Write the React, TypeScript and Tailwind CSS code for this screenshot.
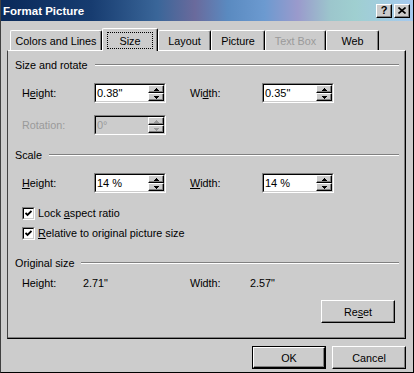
import React from 'react';

const raised =
  'border border-t-white border-l-white border-b-black border-r-black shadow-[inset_-1px_-1px_0_#808080]';

function Arrow({ up, color }: { up?: boolean; color: string }) {
  return (
    <svg width="5" height="3" viewBox="0 0 5 3" shapeRendering="crispEdges">
      <polygon points={up ? '2.5,0 5,3 0,3' : '0,0 5,0 2.5,3'} fill={color} />
    </svg>
  );
}

function Spin({ disabled }: { disabled?: boolean }) {
  const c = disabled ? '#9a9a9a' : '#000';
  return (
    <div className="flex flex-col w-[16px] h-[16px]">
      <div className={`h-[8px] bg-[#cccccc] flex items-center justify-center ${raised}`}>
        <Arrow up color={c} />
      </div>
      <div className={`h-[8px] bg-[#cccccc] flex items-center justify-center ${raised}`}>
        <Arrow color={c} />
      </div>
    </div>
  );
}

function Field({ value, disabled }: { value: string; disabled?: boolean }) {
  return (
    <div className="w-[72px] h-[20px] border border-t-[#808080] border-l-[#808080] border-b-white border-r-white">
      <div
        className={`h-full flex border border-t-black border-l-black border-b-[#cccccc] border-r-[#cccccc] ${
          disabled ? 'bg-[#cccccc] text-[#9a9a9a]' : 'bg-white text-black'
        }`}
      >
        <span className="flex-1 pl-[1px] leading-[16px] text-[11px]">{value}</span>
        <Spin disabled={disabled} />
      </div>
    </div>
  );
}

function Group({ title }: { title: string }) {
  return (
    <div className="flex items-center h-[14px] pl-[7px] pr-[6px]">
      <span>{title}</span>
      <div className="flex-1 ml-[7px] border-t border-t-[#808080] border-b border-b-white" />
    </div>
  );
}

function Check({ children }: { children: React.ReactNode }) {
  return (
    <div className="flex items-center h-[14px] pl-[14px]">
      <div className="w-[13px] h-[13px] border border-t-[#808080] border-l-[#808080] border-b-white border-r-white">
        <div className="w-full h-full bg-white border border-t-black border-l-black border-b-[#cccccc] border-r-[#cccccc] flex items-center justify-center">
          <svg width="7" height="7" viewBox="0 0 7 7">
            <path d="M0.5 3 L2.5 5 L6.5 1" stroke="#000" strokeWidth="1.8" fill="none" />
          </svg>
        </div>
      </div>
      <span className="ml-[3px]">{children}</span>
    </div>
  );
}

function Tab({ label, w, disabled }: { label: string; w: string; disabled?: boolean }) {
  return (
    <div
      className={`${w} h-[20px] flex items-center justify-center border-t border-l border-r border-t-white border-l-white border-r-black rounded-t-[2px] shadow-[inset_-1px_0_0_#808080] ${
        disabled ? 'text-[#9a9a9a]' : ''
      }`}
    >
      {label}
    </div>
  );
}

function Button({ children, def, w = 'w-[74px]' }: { children: React.ReactNode; def?: boolean; w?: string }) {
  return (
    <div className={`${w} h-[23px] ${def ? 'border border-black' : ''}`}>
      <div className={`w-full h-full bg-[#cccccc] flex items-center justify-center ${raised}`}>{children}</div>
    </div>
  );
}

export default function App() {
  return (
    <div className="w-[414px] h-[373px] bg-[#cccccc] border-l border-r border-b border-l-[#404040] border-r-black border-b-black flex flex-col text-[10.8px] text-black font-['Liberation_Sans',Arial,sans-serif] leading-[14px] select-none">
      {/* Title bar */}
      <div className="h-[21px] flex items-center pl-[2px] pr-[3px] bg-[linear-gradient(90deg,#0a2a5a_0%,#173c70_22%,#3a6699_38%,#6a6a9c_47%,#5a8ac0_55%,#6c9ad0_64%,#9a9acc_72%,#9cc6cc_80%,#9fcfd0_86%,#a6caf0_100%)]">
        <span className="text-white font-bold text-[11.5px]">Format Picture</span>
        <div className="ml-auto flex gap-[2px]">
          <div className={`w-[16px] h-[14px] bg-[#cccccc] flex items-center justify-center font-bold text-[11px] leading-none ${raised}`}>
            ?
          </div>
          <div className={`w-[16px] h-[14px] bg-[#cccccc] flex items-center justify-center ${raised}`}>
            <svg width="8" height="7" viewBox="0 0 8 7">
              <path d="M0.5 0.5 L7.5 6.5 M7.5 0.5 L0.5 6.5" stroke="#000" strokeWidth="1.6" />
            </svg>
          </div>
        </div>
      </div>

      {/* Tabs */}
      <div className="flex items-end h-[22px] mt-[7px] pl-[9px]">
        <Tab label="Colors and Lines" w="w-[92px]" />
        <div className="relative z-10 w-[56px] h-[23px] -mb-px bg-[#cccccc] border-t border-l border-r border-t-white border-l-white border-r-black rounded-t-[2px] shadow-[inset_-1px_0_0_#808080] pt-[3px] px-[4px]">
          <div className="h-[17px] border border-dotted border-black flex items-center justify-center">Size</div>
        </div>
        <Tab label="Layout" w="w-[53px]" />
        <Tab label="Picture" w="w-[54px]" />
        <Tab label="Text Box" w="w-[61px]" disabled />
        <Tab label="Web" w="w-[53px]" />
      </div>

      {/* Panel */}
      <div className="ml-[6px] w-[399px] h-[289px] border-t border-l border-r border-b border-t-white border-l-[#404040] border-r-black border-b-black shadow-[inset_-1px_-1px_0_#808080] flex flex-col">
        <div className="mt-[7px]">
          <Group title="Size and rotate" />
        </div>
        <div className="mt-[11px] flex items-center pl-[14px]">
          <span className="w-[72px]">
            H<u>e</u>ight:
          </span>
          <Field value={'0.38"'} />
          <span className="w-[72px] ml-[24px]">
            Wi<u>d</u>th:
          </span>
          <Field value={'0.35"'} />
        </div>
        <div className="mt-[12px] flex items-center pl-[14px]">
          <span className="w-[72px] text-[#9a9a9a]">Rotation:</span>
          <Field value="0°" disabled />
        </div>

        <div className="mt-[13px]">
          <Group title="Scale" />
        </div>
        <div className="mt-[11px] flex items-center pl-[14px]">
          <span className="w-[72px]">
            <u>H</u>eight:
          </span>
          <Field value="14 %" />
          <span className="w-[72px] ml-[24px]">
            <u>W</u>idth:
          </span>
          <Field value="14 %" />
        </div>
        <div className="mt-[13px]">
          <Check>
            Lock <u>a</u>spect ratio
          </Check>
        </div>
        <div className="mt-[6px]">
          <Check>
            <u>R</u>elative to original picture size
          </Check>
        </div>

        <div className="mt-[16px]">
          <Group title="Original size" />
        </div>
        <div className="mt-[6px] flex items-center pl-[14px]">
          <span className="w-[61px]">Height:</span>
          <span className="w-[107px]">2.71"</span>
          <span className="w-[60px]">Width:</span>
          <span>2.57"</span>
        </div>
        <div className="mt-[10px] flex justify-end pr-[10px]">
          <Button>
            Re<u>s</u>et
          </Button>
        </div>
      </div>

      {/* Dialog buttons */}
      <div className="mt-[7px] flex justify-end gap-[6px] pr-[7px]">
        <Button def>OK</Button>
        <Button>Cancel</Button>
      </div>
    </div>
  );
}
